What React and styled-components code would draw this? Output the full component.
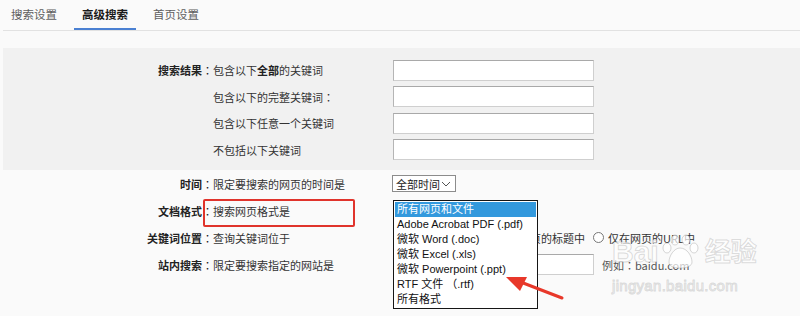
import React from 'react';
import styled, { createGlobalStyle } from 'styled-components';

const GlobalStyle = createGlobalStyle`
  body {
    margin: 0;
    background: #fafafa;
    font-family: "Noto Sans CJK SC", "Liberation Sans", sans-serif;
    font-size: 11px;
    color: #333;
  }
`;

const Page = styled.div`
  position: relative;
  width: 800px;
  height: 316px;
  padding-left: 3px;
  box-sizing: border-box;
  overflow: hidden;
`;

const Tabs = styled.div`
  display: flex;
  height: 30px;
  border-bottom: 1px solid #e2e2e2;
`;

const Tab = styled.div`
  padding: 0 8px;
  margin-right: 9px;
  line-height: 28px;
  font-size: 11.5px;
  color: ${p => (p.$active ? '#1a1a1a' : '#5e5e5e')};
  font-weight: ${p => (p.$active ? 'bold' : 'normal')};
  border-bottom: 2px solid ${p => (p.$active ? '#4a80d2' : 'transparent')};
`;

const Panel = styled.div`
  margin-top: 17px;
  background: #f1f1f1;
  padding: 9px 0 7px;
`;

const Section = styled.div`
  padding-top: 0;
`;

const Row = styled.div`
  position: relative;
  display: grid;
  grid-template-columns: 210px 180px 1fr;
  align-items: center;
  height: ${p => p.$h || 26.5}px;
`;

const Colon = styled.span`
  font-weight: normal;
  font-family: "Noto Sans CJK TC", sans-serif;
`;

const Label = styled.div`
  text-align: right;
  font-weight: bold;
  color: #222;
`;

const Desc = styled.div`
  color: #333;
  white-space: nowrap;
  b { color: #222; }
`;

const Field = styled.div`
  position: relative;
  display: flex;
  align-items: center;
  align-self: ${p => (p.$stretch ? 'stretch' : 'auto')};
  white-space: nowrap;
`;

const Input = styled.div`
  width: 201px;
  height: 21px;
  box-sizing: border-box;
  background: #fff;
  border: 1px solid #cfcfcf;
  border-top-color: #a9a9a9;
  border-left-color: #b5b5b5;
`;

const Select = styled.div`
  margin-left: -1px;
  width: 64px;
  height: 17px;
  box-sizing: border-box;
  border: 1px solid #8c8c8c;
  background: #fff;
  display: flex;
  align-items: center;
  justify-content: space-between;
  padding: 0 4px 0 3px;
  color: #222;
  font-size: 11px;
`;

const Radio = styled.span`
  width: 9px;
  height: 9px;
  border: 1px solid #777;
  border-radius: 50%;
  background: #fff;
  margin-right: 4px;
  flex: none;
`;

const Choice = styled.span`
  display: flex;
  align-items: center;
  margin-right: 8px;
`;

const Hint = styled.span`
  margin-left: 8px;
  color: #555;
`;

const OpenList = styled.div`
  position: absolute;
  left: 0;
  top: 3px;
  z-index: 3;
  width: 145px;
  box-sizing: border-box;
  border: 1px solid #151515;
  background: #fff;
  padding: 1px;
  font-family: "Liberation Sans", "Noto Sans CJK SC", sans-serif;
  font-size: 11px;
  color: #111;
`;

const Option = styled.div`
  height: 15px;
  line-height: 15px;
  overflow: hidden;
  padding-left: 2px;
  background: ${p => (p.$selected ? '#3399dd' : 'transparent')};
  color: ${p => (p.$selected ? '#fff' : '#111')};
`;

const Mark = styled.div`
  position: absolute;
  left: 200px;
  top: 2px;
  width: 152px;
  height: 28px;
  box-sizing: border-box;
  border: 2px solid #e0342c;
  border-radius: 2px;
  pointer-events: none;
`;

const Arrow = styled.svg`
  position: absolute;
  left: 500px;
  top: 270px;
  z-index: 4;
`;

const Watermark = styled.div`
  position: absolute;
  left: 612px;
  top: 234px;
  z-index: 1;
  color: rgba(255, 255, 255, 0.7);
  -webkit-text-stroke: 1px rgba(140, 140, 140, 0.3);
  font-family: "Liberation Sans", "Noto Sans CJK SC", sans-serif;
  pointer-events: none;
`;

const MarkLine = styled.div`
  display: flex;
  align-items: center;
  font-size: 30px;
  font-weight: bold;
  line-height: 36px;
  span { font-size: 26px; margin-left: 2px; }
`;

const MarkSite = styled.div`
  font-size: 15px;
  margin-top: 7px;
  letter-spacing: 0.3px;
`;

const options = [
  '所有网页和文件',
  'Adobe Acrobat PDF (.pdf)',
  '微软 Word (.doc)',
  '微软 Excel (.xls)',
  '微软 Powerpoint (.ppt)',
  'RTF 文件 （.rtf)',
  '所有格式',
];

export default function App() {
  return (
    <>
      <GlobalStyle />
      <Page>
        <Tabs>
          <Tab>搜索设置</Tab>
          <Tab $active>高级搜索</Tab>
          <Tab>首页设置</Tab>
        </Tabs>

        <Panel>
          <Row>
            <Label>搜索结果<Colon>：</Colon></Label>
            <Desc>包含以下<b>全部</b>的关键词</Desc>
            <Field><Input /></Field>
          </Row>
          <Row>
            <Label />
            <Desc>包含以下的完整关键词<Colon>：</Colon></Desc>
            <Field><Input /></Field>
          </Row>
          <Row>
            <Label />
            <Desc>包含以下任意一个关键词</Desc>
            <Field><Input /></Field>
          </Row>
          <Row>
            <Label />
            <Desc>不包括以下关键词</Desc>
            <Field><Input /></Field>
          </Row>
        </Panel>

        <Section>
          <Row $h={27}>
            <Label>时间<Colon>：</Colon></Label>
            <Desc>限定要搜索的网页的时间是</Desc>
            <Field>
              <Select>
                全部时间
                <svg width="10" height="6" viewBox="0 0 10 6">
                  <path d="M1 1l4 4 4-4" fill="none" stroke="#555" strokeWidth="1" />
                </svg>
              </Select>
            </Field>
          </Row>
          <Row $h={27}>
            <Label>文档格式<Colon>：</Colon></Label>
            <Desc>搜索网页格式是</Desc>
            <Field $stretch>
              <OpenList>
                {options.map((o, i) => (
                  <Option key={o} $selected={i === 0}>{o}</Option>
                ))}
              </OpenList>
            </Field>
            <Mark />
          </Row>
          <Row $h={27}>
            <Label>关键词位置<Colon>：</Colon></Label>
            <Desc>查询关键词位于</Desc>
            <Field>
              <Choice><Radio />网页的任何地方</Choice>
              <Choice><Radio />仅网页的标题中</Choice>
              <Choice><Radio />仅在网页的URL中</Choice>
            </Field>
          </Row>
          <Row $h={27}>
            <Label>站内搜索<Colon>：</Colon></Label>
            <Desc>限定要搜索指定的网站是</Desc>
            <Field>
              <Input />
              <Hint>例如<Colon>：</Colon>baidu.com</Hint>
            </Field>
          </Row>
        </Section>

        <Watermark>
          <MarkLine>
            Bai
            <svg width="44" height="36" viewBox="0 0 44 36">
              <g fill="rgba(255,255,255,0.7)" stroke="rgba(140,140,140,0.35)" strokeWidth="1">
                <ellipse cx="8" cy="14" rx="4" ry="5" />
                <ellipse cx="16" cy="6" rx="4" ry="5" />
                <ellipse cx="27" cy="6" rx="4" ry="5" />
                <ellipse cx="35" cy="14" rx="4" ry="5" />
                <path d="M21 14c-6 0-11 8-11 14 0 4 4 6 11 6s12-2 12-6c0-6-5-14-12-14z" />
              </g>
            </svg>
            <span>经验</span>
          </MarkLine>
          <MarkSite>jingyan.baidu.com</MarkSite>
        </Watermark>

        <Arrow width="70" height="34" viewBox="0 0 70 34">
          <path d="M62 28L18 11" stroke="#e8382a" strokeWidth="3" strokeLinecap="round" />
          <path d="M6 7L27 7L20 21Z" fill="#e8382a" />
        </Arrow>
      </Page>
    </>
  );
}
